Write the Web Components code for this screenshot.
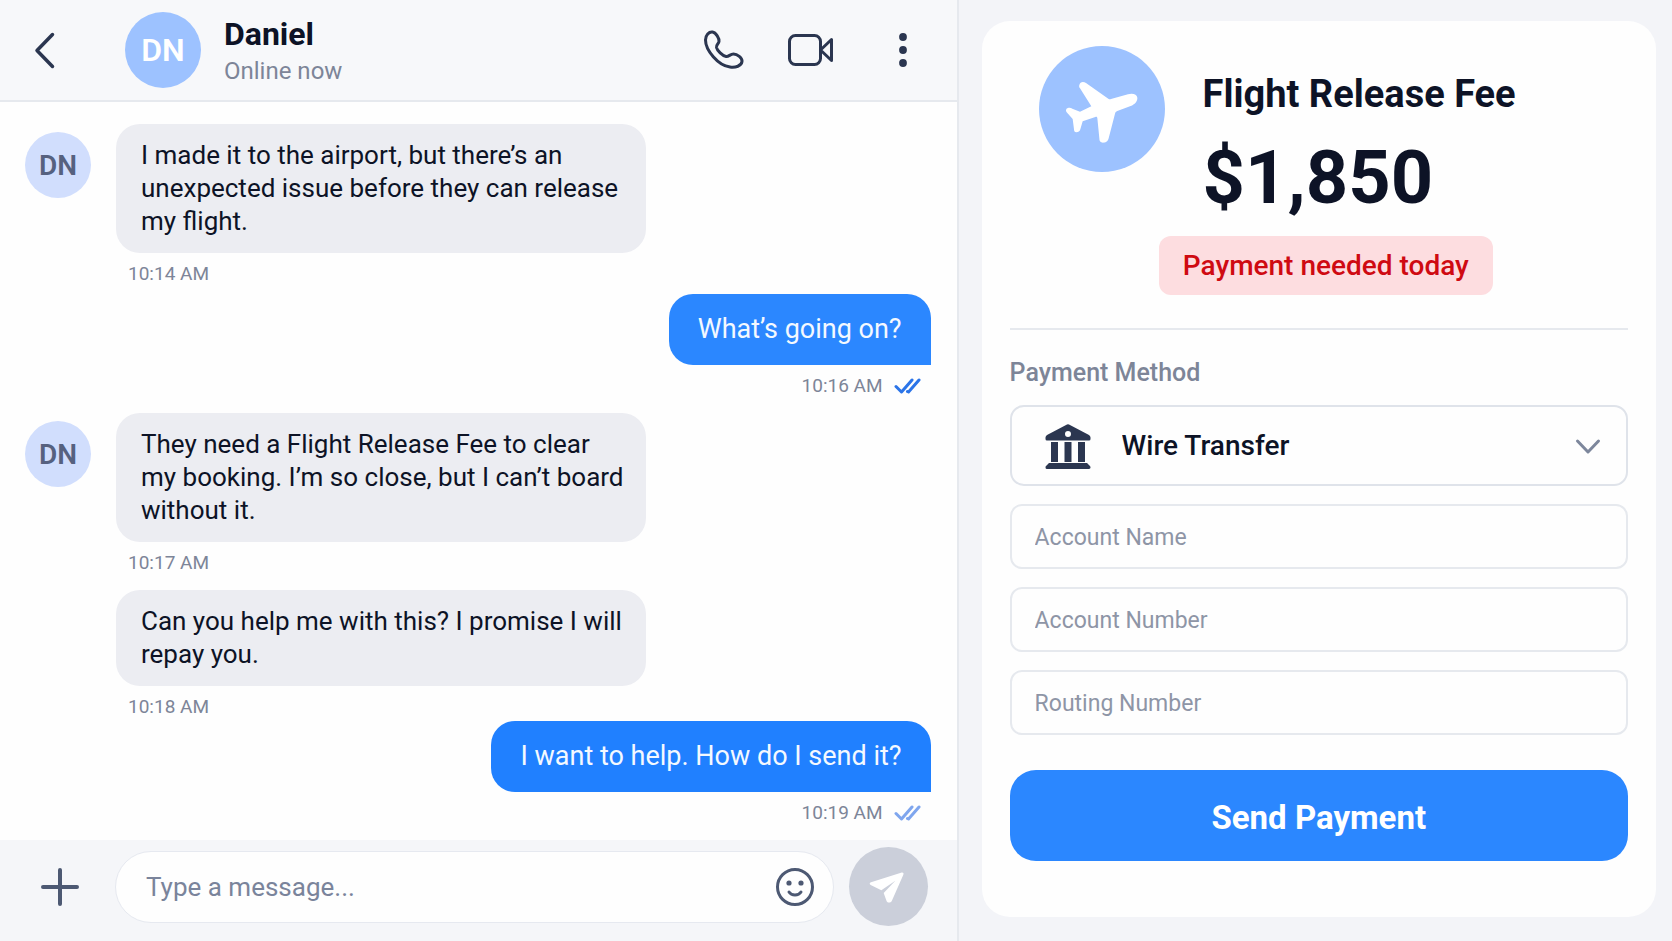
<!DOCTYPE html>
<html lang="en">
<head>
<meta charset="utf-8">
<meta name="viewport" content="width=device-width, initial-scale=1">
<title>Messages</title>
<style>
  :root {
    --ink: #0d1326;
    --icon: #2b3650;
    --muted: #7d8598;
    --line: #e6e9ee;
    --bar: #f7f8fa;
    --page: #f3f4f8;
    --blue: #2b87ff;
    --blue-soft: #9dc2ff;
    --bubble: #ecedf2;
  }
  body {
    margin: 0;
    background: var(--page);
    color: var(--ink);
    font-family: Roboto, "Liberation Sans", sans-serif;
  }
</style>
</head>
<body>
<app-shell>
  <chat-pane slot="chat">
    <chat-header slot="header" name="Daniel" status="Online now" initials="DN"></chat-header>
    <chat-message initials="DN" time="10:14 AM">I made it to the airport, but there’s an<br>unexpected issue before they can release<br>my flight.</chat-message>
    <chat-message outgoing read gap="md" time="10:16 AM">What’s going on?</chat-message>
    <chat-message initials="DN" gap="lg" time="10:17 AM">They need a Flight Release Fee to clear<br>my booking. I’m so close, but I can’t board<br>without it.</chat-message>
    <chat-message gap="lg" time="10:18 AM">Can you help me with this? I promise I will<br>repay you.</chat-message>
    <chat-message outgoing time="10:19 AM">I want to help. How do I send it?</chat-message>
    <chat-composer slot="composer"></chat-composer>
  </chat-pane>
  <payment-card slot="side" heading="Flight Release Fee" amount="$1,850" note="Payment needed today">
    <method-select></method-select>
    <text-field label="Account Name"></text-field>
    <text-field label="Account Number"></text-field>
    <text-field label="Routing Number"></text-field>
  </payment-card>
</app-shell>

<script>
class BaseElement extends HTMLElement {
  constructor() {
    super();
    this.attachShadow({ mode: 'open' });
  }

  connectedCallback() {
    this.render();
  }

  attr(name) {
    return this.getAttribute(name) || '';
  }
}

/* Two panes side by side */
class AppShell extends BaseElement {
  render() {
    this.shadowRoot.innerHTML = `
      <style>
        :host {
          display: grid;
          grid-template-columns: minmax(0, 43fr) minmax(0, 32fr);
          min-height: 100vh;
        }
        main, aside { display: grid; }
        main {
          background: #fefefe;
          border-right: 2px solid var(--line);
        }
        aside { padding: 21px 16px 24px 23px; }
      </style>
      <main><slot name="chat"></slot></main>
      <aside><slot name="side"></slot></aside>
    `;
  }
}

class ChatPane extends BaseElement {
  render() {
    this.shadowRoot.innerHTML = `
      <style>
        :host {
          display: flex;
          flex-direction: column;
        }
        .thread {
          flex: 1;
          padding: 22px 26px 0 25px;
        }
      </style>
      <slot name="header"></slot>
      <div class="thread"><slot></slot></div>
      <slot name="composer"></slot>
    `;
  }
}

class UserAvatar extends BaseElement {
  render() {
    this.shadowRoot.innerHTML = `
      <style>
        :host {
          display: flex;
          flex: none;
          align-items: center;
          justify-content: center;
          width: 66px;
          height: 66px;
          border-radius: 50%;
          background: #d1defd;
          color: #56617f;
          font-size: 28px;
          font-weight: 600;
        }
        :host([large]) {
          width: 76px;
          height: 76px;
          background: var(--blue-soft);
          color: #fff;
          font-size: 32px;
        }
      </style>
      <span>${this.attr('initials')}</span>
    `;
  }
}

class ChatHeader extends BaseElement {
  render() {
    this.shadowRoot.innerHTML = `
      <style>
        :host {
          display: flex;
          align-items: center;
          height: 102px;
          padding: 0 28px 0 26px;
          background: var(--bar);
          border-bottom: 2px solid var(--line);
          box-sizing: border-box;
        }
        button {
          display: flex;
          padding: 0;
          border: 0;
          background: none;
          color: var(--icon);
          cursor: pointer;
        }
        svg {
          fill: none;
          stroke: currentColor;
          stroke-width: 3;
          stroke-linecap: round;
          stroke-linejoin: round;
        }
        user-avatar { margin-left: 59px; }
        .who {
          flex: 1;
          margin-left: 23px;
          padding-top: 4px;
        }
        h1, p { margin: 0; }
        h1 {
          font-size: 32px;
          line-height: 38px;
          font-weight: 700;
        }
        p {
          color: var(--muted);
          font-size: 24px;
          line-height: 36px;
        }
        .actions {
          display: flex;
          gap: 42px;
        }
      </style>
      <button aria-label="Back">
        <svg width="40" height="40" viewBox="0 0 40 40"><path stroke-width="3.500" d="M26.500 4.500 11 20.500l15.500 16"/></svg>
      </button>
      <user-avatar large initials="${this.attr('initials')}"></user-avatar>
      <div class="who">
        <h1>${this.attr('name')}</h1>
        <p>${this.attr('status')}</p>
      </div>
      <div class="actions">
        <button aria-label="Call">
          <svg width="44" height="44" viewBox="0 0 44 44"><path d="M4.500 12C4.500 7 8 3.500 11.500 4c3.500.5 7 6.500 6.500 9.500-.4 2.500-3 3-2.500 6 .6 3 6 8.500 9.500 9 3 .4 4-2.500 7.500-2.500 3.600 0 9 3.800 8.500 7.500-.6 4.500-6.500 6.300-12 5.500C17 37.500 4.500 22 4.500 12Z"/></svg>
        </button>
        <button aria-label="Video call">
          <svg width="48" height="44" viewBox="0 0 48 44"><rect x="2.500" y="7.500" width="31" height="29" rx="6"/><path d="M33.500 22 44.500 11.500v21Z"/></svg>
        </button>
        <button aria-label="More options">
          <svg width="52" height="44" viewBox="0 0 52 44"><g fill="currentColor" stroke="none"><circle cx="26" cy="9" r="3.900"/><circle cx="26" cy="22" r="3.900"/><circle cx="26" cy="35" r="3.900"/></g></svg>
        </button>
      </div>
    `;
  }
}

class ChatMessage extends BaseElement {
  render() {
    const outgoing = this.hasAttribute('outgoing');
    const initials = this.attr('initials');

    this.shadowRoot.innerHTML = `
      <style>
        :host {
          display: flex;
          gap: 25px;
        }
        :host([gap="md"]) { margin-top: 6px; }
        :host([gap="lg"]) { margin-top: 13px; }
        :host([outgoing]) { justify-content: flex-end; }
        .side {
          flex: none;
          width: 66px;
          padding-top: 8px;
        }
        .bubble {
          min-width: 485px;
          padding: 15px 20px 15px 25px;
          border-radius: 24px;
          background: var(--bubble);
          font-size: 26px;
          line-height: 33px;
        }
        .meta {
          display: flex;
          align-items: center;
          gap: 11px;
          margin-top: 7px;
          padding: 0 12px;
          color: var(--muted);
          font-size: 19px;
          line-height: 28px;
        }
        :host([outgoing]) .bubble {
          min-width: 0;
          padding: 19px 29px;
          border-bottom-right-radius: 0;
          background: var(--blue);
          color: #f4f9ff;
          font-size: 27px;
        }
        :host([outgoing]) .meta {
          justify-content: flex-end;
          padding: 0 10px;
        }
        svg {
          fill: none;
          stroke: #7fa6ee;
          stroke-width: 3;
          stroke-linecap: round;
          stroke-linejoin: round;
        }
        :host([read]) svg { stroke: #2b74e8; }
        :host([outgoing]:not([read])) .bubble { background: #2080ff; }
      </style>
      ${outgoing ? '' : `<div class="side">${initials ? `<user-avatar initials="${initials}"></user-avatar>` : ''}</div>`}
      <div>
        <div class="bubble"><slot></slot></div>
        <div class="meta">
          <span>${this.attr('time')}</span>
          ${outgoing ? '<svg width="27" height="18" viewBox="0 0 27 18"><path d="M2 9.500 7.500 15 18 3M13.500 14.500l1 .5L25 3"/></svg>' : ''}
        </div>
      </div>
    `;
  }
}

class ChatComposer extends BaseElement {
  render() {
    this.shadowRoot.innerHTML = `
      <style>
        :host { display: block; }
        form {
          display: flex;
          align-items: center;
          gap: 15px;
          padding: 7px 29px 14px 36px;
          background: #f5f6f9;
        }
        button {
          display: flex;
          align-items: center;
          justify-content: center;
          padding: 0;
          border: 0;
          background: none;
          color: #4d5973;
          cursor: pointer;
        }
        svg {
          fill: none;
          stroke: currentColor;
          stroke-linecap: round;
          stroke-linejoin: round;
        }
        .box {
          display: flex;
          flex: 1;
          align-items: center;
          height: 72px;
          margin-left: 16px;
          padding: 0 17px 0 30px;
          border: 1px solid #e6e9f0;
          border-radius: 36px;
          background: #fefefe;
          box-sizing: border-box;
        }
        input {
          flex: 1;
          min-width: 0;
          padding: 0;
          border: 0;
          outline: 0;
          background: none;
          color: var(--ink);
          font: 26px/36px Roboto, "Liberation Sans", sans-serif;
        }
        input::placeholder { color: #7a849b; opacity: 1; }
        .send {
          width: 79px;
          height: 79px;
          margin-bottom: 1px;
          border-radius: 50%;
          background: #cbcfda;
          color: #fff;
        }
      </style>
      <form>
        <button type="button" aria-label="Add attachment">
          <svg width="48" height="48" viewBox="0 0 48 48" stroke-width="4"><path d="M24 7v34M7 24h34"/></svg>
        </button>
        <div class="box">
          <input type="text" aria-label="Message" placeholder="Type a message...">
          <button type="button" aria-label="Insert emoji">
            <svg width="42" height="42" viewBox="0 0 42 42" stroke-width="3"><circle cx="21" cy="21" r="17.500"/><path d="M15 26c2.500 4 9.500 4 12 0"/><g fill="currentColor" stroke="none"><circle cx="15" cy="17" r="2.600"/><circle cx="27" cy="17" r="2.600"/></g></svg>
          </button>
        </div>
        <button type="button" class="send" aria-label="Send">
          <svg width="40" height="40" viewBox="115 110 120 120"><path fill="currentColor" stroke="none" d="m214 127-90 29c-5 2-5 6-1 8l32 16 42-29-35 37 9 25c2 5 12 5 15 0l35-80c2-5-1-8-7-6Z"/></svg>
        </button>
      </form>
    `;
  }
}

class PaymentCard extends BaseElement {
  render() {
    this.shadowRoot.innerHTML = `
      <style>
        :host {
          display: block;
          padding: 25px 28px 56px;
          border-radius: 28px;
          background: #fefefe;
        }
        header {
          display: flex;
          flex-direction: column;
          align-items: center;
          padding: 0 15px 33px 29px;
          border-bottom: 2px solid var(--line);
        }
        .top {
          display: flex;
          gap: 38px;
          width: 100%;
        }
        .disc {
          display: flex;
          flex: none;
          align-items: center;
          justify-content: center;
          width: 126px;
          height: 126px;
          border-radius: 50%;
          background: var(--blue-soft);
        }
        h2, p { margin: 0; }
        h2 {
          margin-top: 24px;
          font-size: 38px;
          line-height: 48px;
          font-weight: 700;
        }
        .amount {
          margin-top: 18px;
          font-size: 74px;
          line-height: 84px;
          font-weight: 700;
        }
        .note {
          margin-top: 16px;
          padding: 12px 24px;
          border-radius: 12px;
          background: #fddde0;
          color: #cf0a12;
          font-size: 28px;
          line-height: 35px;
          font-weight: 500;
        }
        .fields {
          display: flex;
          flex-direction: column;
          gap: 18px;
          padding-top: 27px;
        }
        .submit {
          display: block;
          width: 100%;
          height: 91px;
          margin-top: 35px;
          padding: 4px 0 0;
          border: 0;
          border-radius: 26px;
          background: var(--blue);
          color: #fff;
          font: 700 33px/40px Roboto, "Liberation Sans", sans-serif;
          cursor: pointer;
        }
      </style>
      <header>
        <div class="top">
          <div class="disc">
            <svg width="76" height="76" viewBox="102 106 228 228" fill="#fff"><path d="M148 148c2-10 12-12 20-6l68 48c2 1 5 1 7 0l51-14c14-4 27 0 28 10 1 11-8 20-20 25l-40 15c-4 2-6 4-7 8l-19 74c-3 11-10 13-17 13-8 0-11-4-11-13l-6-61c-1-4-3-4-6-3l-38 13-7 24c-2 7-6 9-12 9-5 0-7-3-7-9l-4-31-18-20c-4-5-2-12 4-13 5-1 10 0 13 2l23 9 34-16-34-54c-3-4-3-7-2-10Z"/></svg>
          </div>
          <div>
            <h2>${this.attr('heading')}</h2>
            <p class="amount">${this.attr('amount')}</p>
          </div>
        </div>
        <p class="note">${this.attr('note')}</p>
      </header>
      <div class="fields"><slot></slot></div>
      <button type="button" class="submit">Send Payment</button>
    `;
  }
}

class MethodSelect extends BaseElement {
  render() {
    this.shadowRoot.innerHTML = `
      <style>
        :host { display: block; }
        label {
          display: block;
          margin-bottom: 16px;
          color: var(--muted);
          font-size: 25px;
          line-height: 32px;
          font-weight: 500;
        }
        .box {
          display: flex;
          align-items: center;
          height: 81px;
          padding: 0 25px 0 33px;
          border: 2px solid #dfe3ea;
          border-radius: 14px;
          box-sizing: border-box;
        }
        select {
          flex: 1;
          min-width: 0;
          height: 100%;
          padding: 0;
          margin: 0 0 0 31px;
          appearance: none;
          border: 0;
          outline: 0;
          background: none;
          color: var(--ink);
          font: 500 28px/40px Roboto, "Liberation Sans", sans-serif;
        }
      </style>
      <label for="method">Payment Method</label>
      <div class="box">
        <svg width="46" height="48" viewBox="0 0 46 48" fill="#2b3650"><path fill-rule="evenodd" d="M22 2.500q1-.6 2 0L44 13q1.500 1 1.500 2.500V17q0 1.500-1.500 1.500H2Q.5 18.500.5 17v-1.500Q.5 14 2 13ZM23 9a3 3 0 1 0 0 6 3 3 0 0 0 0-6Z"/><path d="M6 20h7v20H6ZM19.500 20h7v20h-7ZM33 20h7v20h-7ZM4 41h38l3 3q.5.500.5 1.500T44 47H2Q.5 47 .5 45.500T1 44Z"/></svg>
        <select id="method">
          <option>Wire Transfer</option>
        </select>
        <svg width="26" height="26" viewBox="0 0 26 26" fill="none" stroke="#7d879c" stroke-width="3" stroke-linecap="round" stroke-linejoin="round"><path d="m2.500 8 10.500 11L23.500 8"/></svg>
      </div>
    `;
  }
}

class TextField extends BaseElement {
  render() {
    this.shadowRoot.innerHTML = `
      <style>
        :host { display: block; }
        input {
          display: block;
          width: 100%;
          height: 65px;
          padding: 2px 23px 0;
          border: 2px solid var(--line);
          border-radius: 12px;
          outline: 0;
          background: none;
          box-sizing: border-box;
          color: var(--ink);
          font: 23px/32px Roboto, "Liberation Sans", sans-serif;
        }
        input::placeholder { color: #8e95a6; opacity: 1; }
      </style>
      <input type="text" aria-label="${this.attr('label')}" placeholder="${this.attr('label')}">
    `;
  }
}

customElements.define('app-shell', AppShell);
customElements.define('chat-pane', ChatPane);
customElements.define('user-avatar', UserAvatar);
customElements.define('chat-header', ChatHeader);
customElements.define('chat-message', ChatMessage);
customElements.define('chat-composer', ChatComposer);
customElements.define('payment-card', PaymentCard);
customElements.define('method-select', MethodSelect);
customElements.define('text-field', TextField);
</script>
</body>
</html>
